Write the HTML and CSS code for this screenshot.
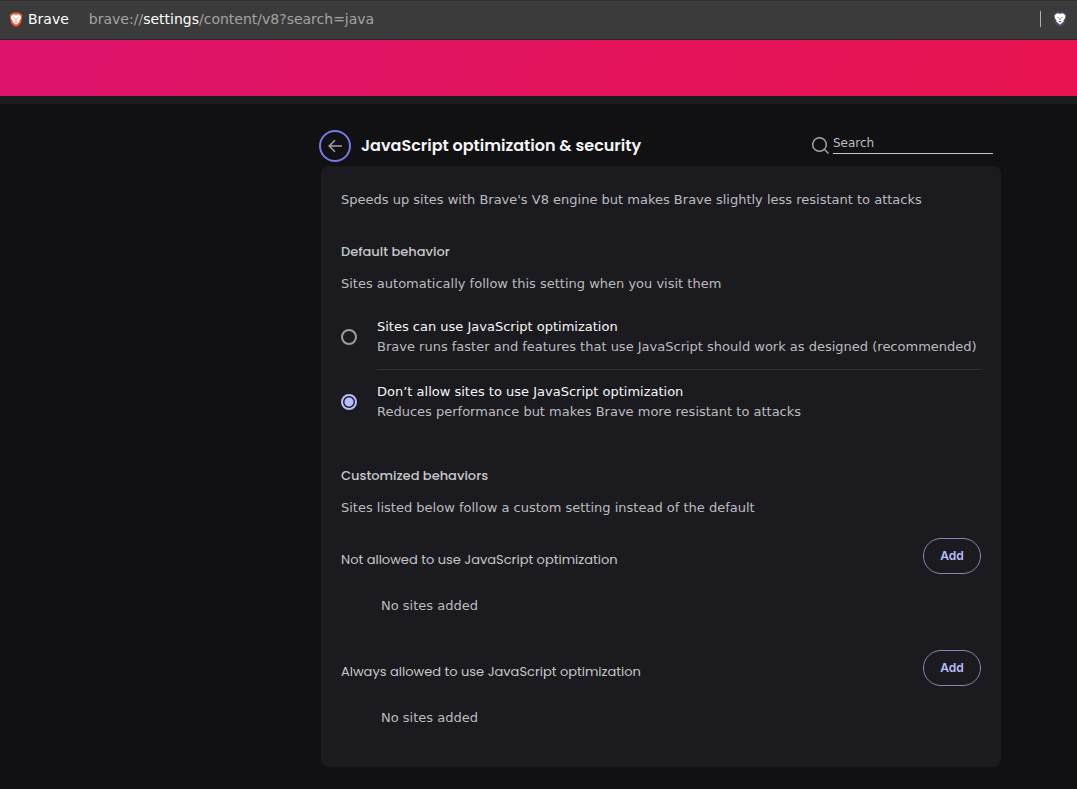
FILE: index.html
```html
<!DOCTYPE html>
<html lang="en">
<head>
<meta charset="utf-8">
<meta name="viewport" content="width=device-width, initial-scale=1">
<title>Settings - JavaScript optimization &amp; security</title>
<link rel="stylesheet" href="styles.css">
</head>
<body>
<svg class="sprite" aria-hidden="true">
  <symbol id="lion" viewBox="0 0 14 16">
    <path class="shield" d="M4 0.500h6l1.300 1.300 1.200-.2 1.300 2-.5 1.500.3 1.200-1.700 6c-.3.8-.7 1.200-1.300 1.600L7 16 3.400 13.900c-.6-.4-1-.8-1.300-1.600l-1.700-6 .3-1.200-.5-1.500 1.300-2 1.200.2z"/>
    <path class="face" d="M4 2.300 7 2.800l3-.5 2.500 2.300-.4 1.700.2.800-1.800 2.200.2 1.500-1.800 1.100L7 13.700l-1.900-1.800-1.800-1.100.2-1.500-1.800-2.200.2-.8-.4-1.700z"/>
    <path class="shield" d="m3.900 5.900 2 .5-.3.800zM10.100 5.900l-2 .5.300.800zM6.700 6.800h.6l.3 1.700-.6.500-.6-.5zM5.300 10.600 7 10.100l1.700.5-1.700.8z"/>
  </symbol>
</svg>
<header class="toolbar">
  <svg class="brand-icon"><use href="#lion"/></svg>
  <span class="brand">Brave</span>
  <div class="address">brave://<span class="host">settings</span>/content/v8?search=java</div>
  <button class="shields" type="button" aria-label="Brave Shields"><svg class="shields-icon"><use href="#lion"/></svg></button>
</header>
<div class="banner"></div>
<main class="page">
  <div class="heading">
    <button class="back" type="button" aria-label="Back">
      <svg width="16" height="16" viewBox="0 0 16 16"><path d="M15 8H2M8 2.200 2.200 8 8 13.800"/></svg>
    </button>
    <h1>JavaScript optimization &amp; security</h1>
    <label class="search">
      <svg width="17" height="17" viewBox="0 0 17 17"><circle cx="7.500" cy="7.500" r="6.800"/><path d="m12.300 12.300 4.200 4.200"/></svg>
      <input type="search" placeholder="Search" aria-label="Search">
    </label>
  </div>
  <div class="card">
    <p>Speeds up sites with Brave's V8 engine but makes Brave slightly less resistant to attacks</p>
    <section class="behavior">
      <h2>Default behavior</h2>
      <p>Sites automatically follow this setting when you visit them</p>
      <div class="options">
        <label class="option">
          <input type="radio" name="behavior">
          <span class="option-text"><span class="option-title">Sites can use JavaScript optimization</span>Brave runs faster and features that use JavaScript should work as designed (recommended)</span>
        </label>
        <label class="option">
          <input type="radio" name="behavior" checked>
          <span class="option-text"><span class="option-title">Don’t allow sites to use JavaScript optimization</span>Reduces performance but makes Brave more resistant to attacks</span>
        </label>
      </div>
    </section>
    <section class="custom">
      <h2>Customized behaviors</h2>
      <p>Sites listed below follow a custom setting instead of the default</p>
      <div class="list">
        <div class="list-head"><h3>Not allowed to use JavaScript optimization</h3><button class="add" type="button">Add</button></div>
        <p class="empty">No sites added</p>
      </div>
      <div class="list">
        <div class="list-head"><h3>Always allowed to use JavaScript optimization</h3><button class="add" type="button">Add</button></div>
        <p class="empty">No sites added</p>
      </div>
    </section>
  </div>
</main>
</body>
</html>
```

FILE: styles.css
```css
* { box-sizing: border-box; }
body {
  margin: 0;
  min-height: 100vh;
  background: #111113;
  color: #bcbcbf;
  font: 13px/20px "DejaVu Sans", sans-serif;
}
h1, h2, h3, p { margin: 0; }
button { padding: 0; background: none; border: 0; cursor: pointer; }
.sprite { position: absolute; width: 0; height: 0; }

.toolbar {
  display: flex;
  align-items: center;
  height: 40px;
  padding: 0 10px 2px 9px;
  background: #3b3b3b;
  border-top: 1px solid #303030;
  border-bottom: 1px solid #282828;
  font-size: 14px;
}
.brand-icon { width: 14px; height: 15px; fill: #f4512c; }
.face { fill: #fff; }
.brand { margin-left: 5px; color: #fff; }
.address { flex: 1; margin-left: 20px; color: #a3a3a3; }
.host { color: #fff; }
.shields {
  display: flex;
  height: 16px;
  padding-left: 12px;
  border-left: 1px solid #b0b0b0;
}
.shields-icon { width: 14px; height: 16px; fill: #4a4a63; }

.banner {
  height: 64px;
  background: linear-gradient(120deg, #dc136c, #e9134f);
  border-bottom: 8px solid #1b1b1f;
}

.page { max-width: 758px; margin: 0 0 0 auto; padding: 26px 76px 22px 0; }
.heading { display: flex; align-items: center; height: 32px; gap: 10px; }
.back {
  display: grid;
  place-items: center;
  flex: none;
  width: 32px;
  height: 32px;
  border: 2px solid #737aeb;
  border-radius: 50%;
}
.back svg, .search svg { fill: none; stroke: #a1a1a8; stroke-width: 1.500; }
h1 { flex: 1; color: #f5f5f7; font: 600 16px/24px Poppins, Inter, sans-serif; }
.search { display: flex; align-items: end; gap: 4px; margin: 0 8px 4px 0; }
.search input {
  width: 160px;
  height: 20px;
  padding: 0 0 2px;
  background: none;
  border: 0;
  border-bottom: 1px solid #c8c8ca;
  border-radius: 0;
  outline: 0;
  color: inherit;
  font: 12px "DejaVu Sans", sans-serif;
}
.search input::placeholder { color: #bcbcbf; opacity: 1; }

.card {
  margin: 4px 0 0 2px;
  padding: 24px 20px 39px;
  background: #1b1b1f;
  border-radius: 8px;
}
h2, h3 { font: 500 13px/20px Poppins, Inter, sans-serif; color: #c6c6c9; }
h3 { font-weight: 400; }
h2 + p { margin-top: 12px; }
.behavior { margin-top: 32px; }
.options { margin-top: 10px; }
.option { display: flex; align-items: center; gap: 20px; }
.option-text { flex: 1; padding: 13px 0 12px; }
.option-title { display: block; color: #f5f5f7; }
.option + .option .option-text { padding-top: 12px; border-top: 1px solid #303034; }
.option input {
  appearance: none;
  width: 16px;
  height: 16px;
  margin: 0;
  border: 2px solid #9b9ba0;
  border-radius: 50%;
}
.option input:checked {
  border-color: #b9beff;
  background: radial-gradient(circle, #b9beff 4px, transparent 5px);
}
.custom { margin-top: 32px; }
.list { margin-top: 20px; }
.list + .list { margin-top: 34px; }
.list-head { display: flex; align-items: center; justify-content: space-between; }
.list-head h3 { padding-top: 8px; }
.add {
  width: 58px;
  height: 36px;
  border: 1px solid #8587b8;
  border-radius: 18px;
  color: #b9beff;
  font: 600 12px/20px Inter, sans-serif;
}
.empty { margin: 22px 0 0 40px; }
```
